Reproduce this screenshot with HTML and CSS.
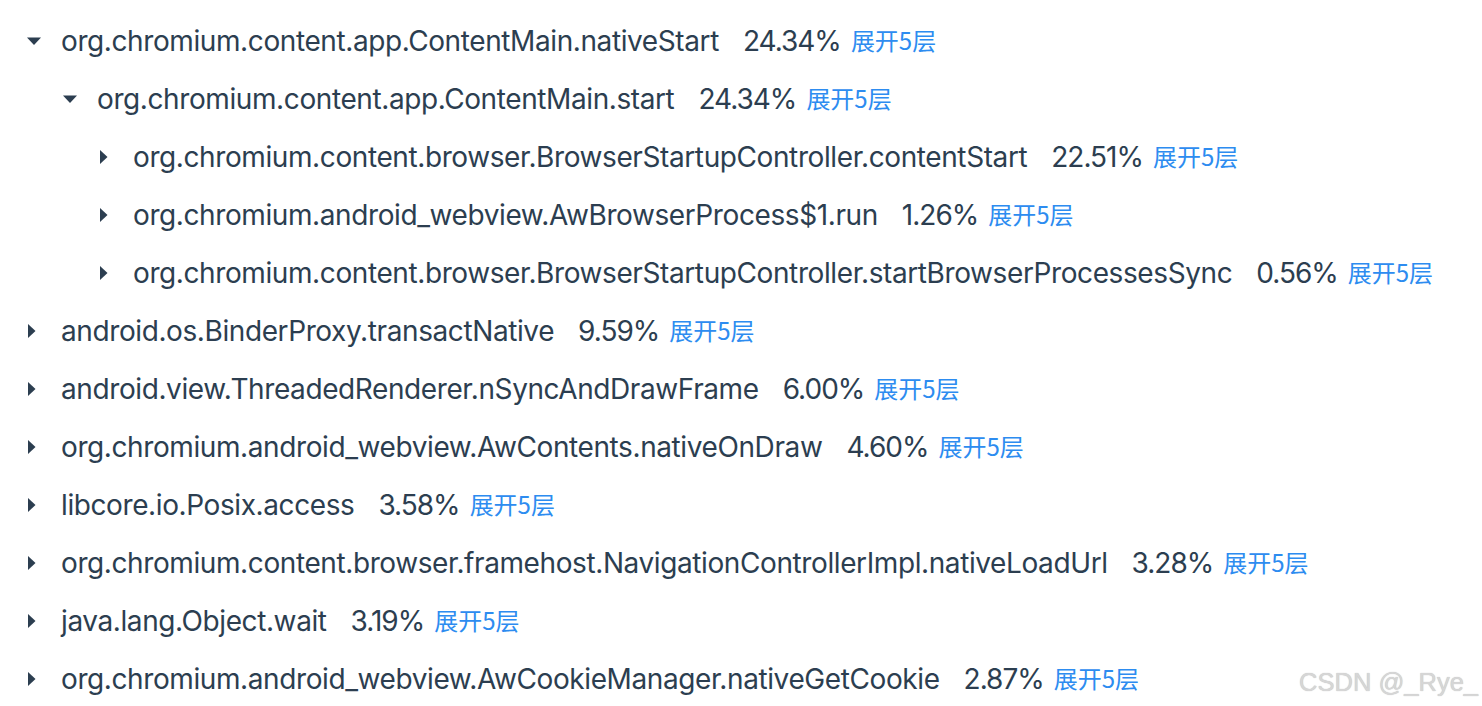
FILE: index.html
```html
<!DOCTYPE html>
<html lang="zh">
<head>
<meta charset="utf-8">
<link rel="stylesheet" href="styles.css">
</head>
<body>
<div class="tree">
  <div class="row lv0"><svg class="caret" viewBox="0 0 14 14"><polygon points="0,3.5 14,3.5 7,11"/></svg><span class="name">org.chromium.content.app.ContentMain.nativeStart</span><span class="pct">24.34%</span><a class="more">展开5层</a></div>
  <div class="row lv1"><svg class="caret" viewBox="0 0 14 14"><polygon points="0,3.5 14,3.5 7,11"/></svg><span class="name">org.chromium.content.app.ContentMain.start</span><span class="pct">24.34%</span><a class="more">展开5层</a></div>
  <div class="row lv2"><svg class="caret" viewBox="0 0 14 14"><polygon points="1,0 8.5,7 1,14"/></svg><span class="name">org.chromium.content.browser.BrowserStartupController.contentStart</span><span class="pct">22.51%</span><a class="more">展开5层</a></div>
  <div class="row lv2"><svg class="caret" viewBox="0 0 14 14"><polygon points="1,0 8.5,7 1,14"/></svg><span class="name">org.chromium.android_webview.AwBrowserProcess$1.run</span><span class="pct">1.26%</span><a class="more">展开5层</a></div>
  <div class="row lv2"><svg class="caret" viewBox="0 0 14 14"><polygon points="1,0 8.5,7 1,14"/></svg><span class="name">org.chromium.content.browser.BrowserStartupController.startBrowserProcessesSync</span><span class="pct">0.56%</span><a class="more">展开5层</a></div>
  <div class="row lv0"><svg class="caret" viewBox="0 0 14 14"><polygon points="1,0 8.5,7 1,14"/></svg><span class="name">android.os.BinderProxy.transactNative</span><span class="pct">9.59%</span><a class="more">展开5层</a></div>
  <div class="row lv0"><svg class="caret" viewBox="0 0 14 14"><polygon points="1,0 8.5,7 1,14"/></svg><span class="name">android.view.ThreadedRenderer.nSyncAndDrawFrame</span><span class="pct">6.00%</span><a class="more">展开5层</a></div>
  <div class="row lv0"><svg class="caret" viewBox="0 0 14 14"><polygon points="1,0 8.5,7 1,14"/></svg><span class="name">org.chromium.android_webview.AwContents.nativeOnDraw</span><span class="pct">4.60%</span><a class="more">展开5层</a></div>
  <div class="row lv0"><svg class="caret" viewBox="0 0 14 14"><polygon points="1,0 8.5,7 1,14"/></svg><span class="name">libcore.io.Posix.access</span><span class="pct">3.58%</span><a class="more">展开5层</a></div>
  <div class="row lv0"><svg class="caret" viewBox="0 0 14 14"><polygon points="1,0 8.5,7 1,14"/></svg><span class="name">org.chromium.content.browser.framehost.NavigationControllerImpl.nativeLoadUrl</span><span class="pct">3.28%</span><a class="more">展开5层</a></div>
  <div class="row lv0"><svg class="caret" viewBox="0 0 14 14"><polygon points="1,0 8.5,7 1,14"/></svg><span class="name">java.lang.Object.wait</span><span class="pct">3.19%</span><a class="more">展开5层</a></div>
  <div class="row lv0"><svg class="caret" viewBox="0 0 14 14"><polygon points="1,0 8.5,7 1,14"/></svg><span class="name">org.chromium.android_webview.AwCookieManager.nativeGetCookie</span><span class="pct">2.87%</span><a class="more">展开5层</a></div>
</div>
<div class="watermark">CSDN @_Rye_</div>
</body>
</html>
```
FILE: styles.css
```css
html, body {
  margin: 0;
  padding: 0;
  background: #ffffff;
}
body {
  width: 1482px;
  height: 706px;
  overflow: hidden;
  position: relative;
  font-family: Inter, "Noto Sans", "Noto Sans CJK SC", sans-serif;
  color: #2c3e50;
}
.tree {
  padding-top: 12px;
  padding-left: 27px;
}
.row {
  display: flex;
  align-items: center;
  height: 58px;
  white-space: nowrap;
}
.lv1 { padding-left: 36px; }
.lv2 { padding-left: 72px; }
.caret {
  width: 14px;
  height: 14px;
  flex: none;
  margin-right: 20px;
  fill: #2c3e50;
}
.name {
  font-size: 28px;
  letter-spacing: -0.4px;
}
.pct {
  font-size: 28px;
  margin-left: 24px;
  letter-spacing: -1px;
}
.more {
  font-size: 24px;
  line-height: 24px;
  margin-left: 10px;
  padding-bottom: 3px;
  color: #2d8cf0;
  font-family: "Noto Sans CJK SC", sans-serif;
  cursor: pointer;
}
.watermark {
  position: absolute;
  right: 4px;
  bottom: 9px;
  font-family: "Liberation Sans", Arial, sans-serif;
  font-size: 25.5px;
  color: #d6d6d6;
  text-shadow: 0 0 1px #b8b8b8;
}
```
